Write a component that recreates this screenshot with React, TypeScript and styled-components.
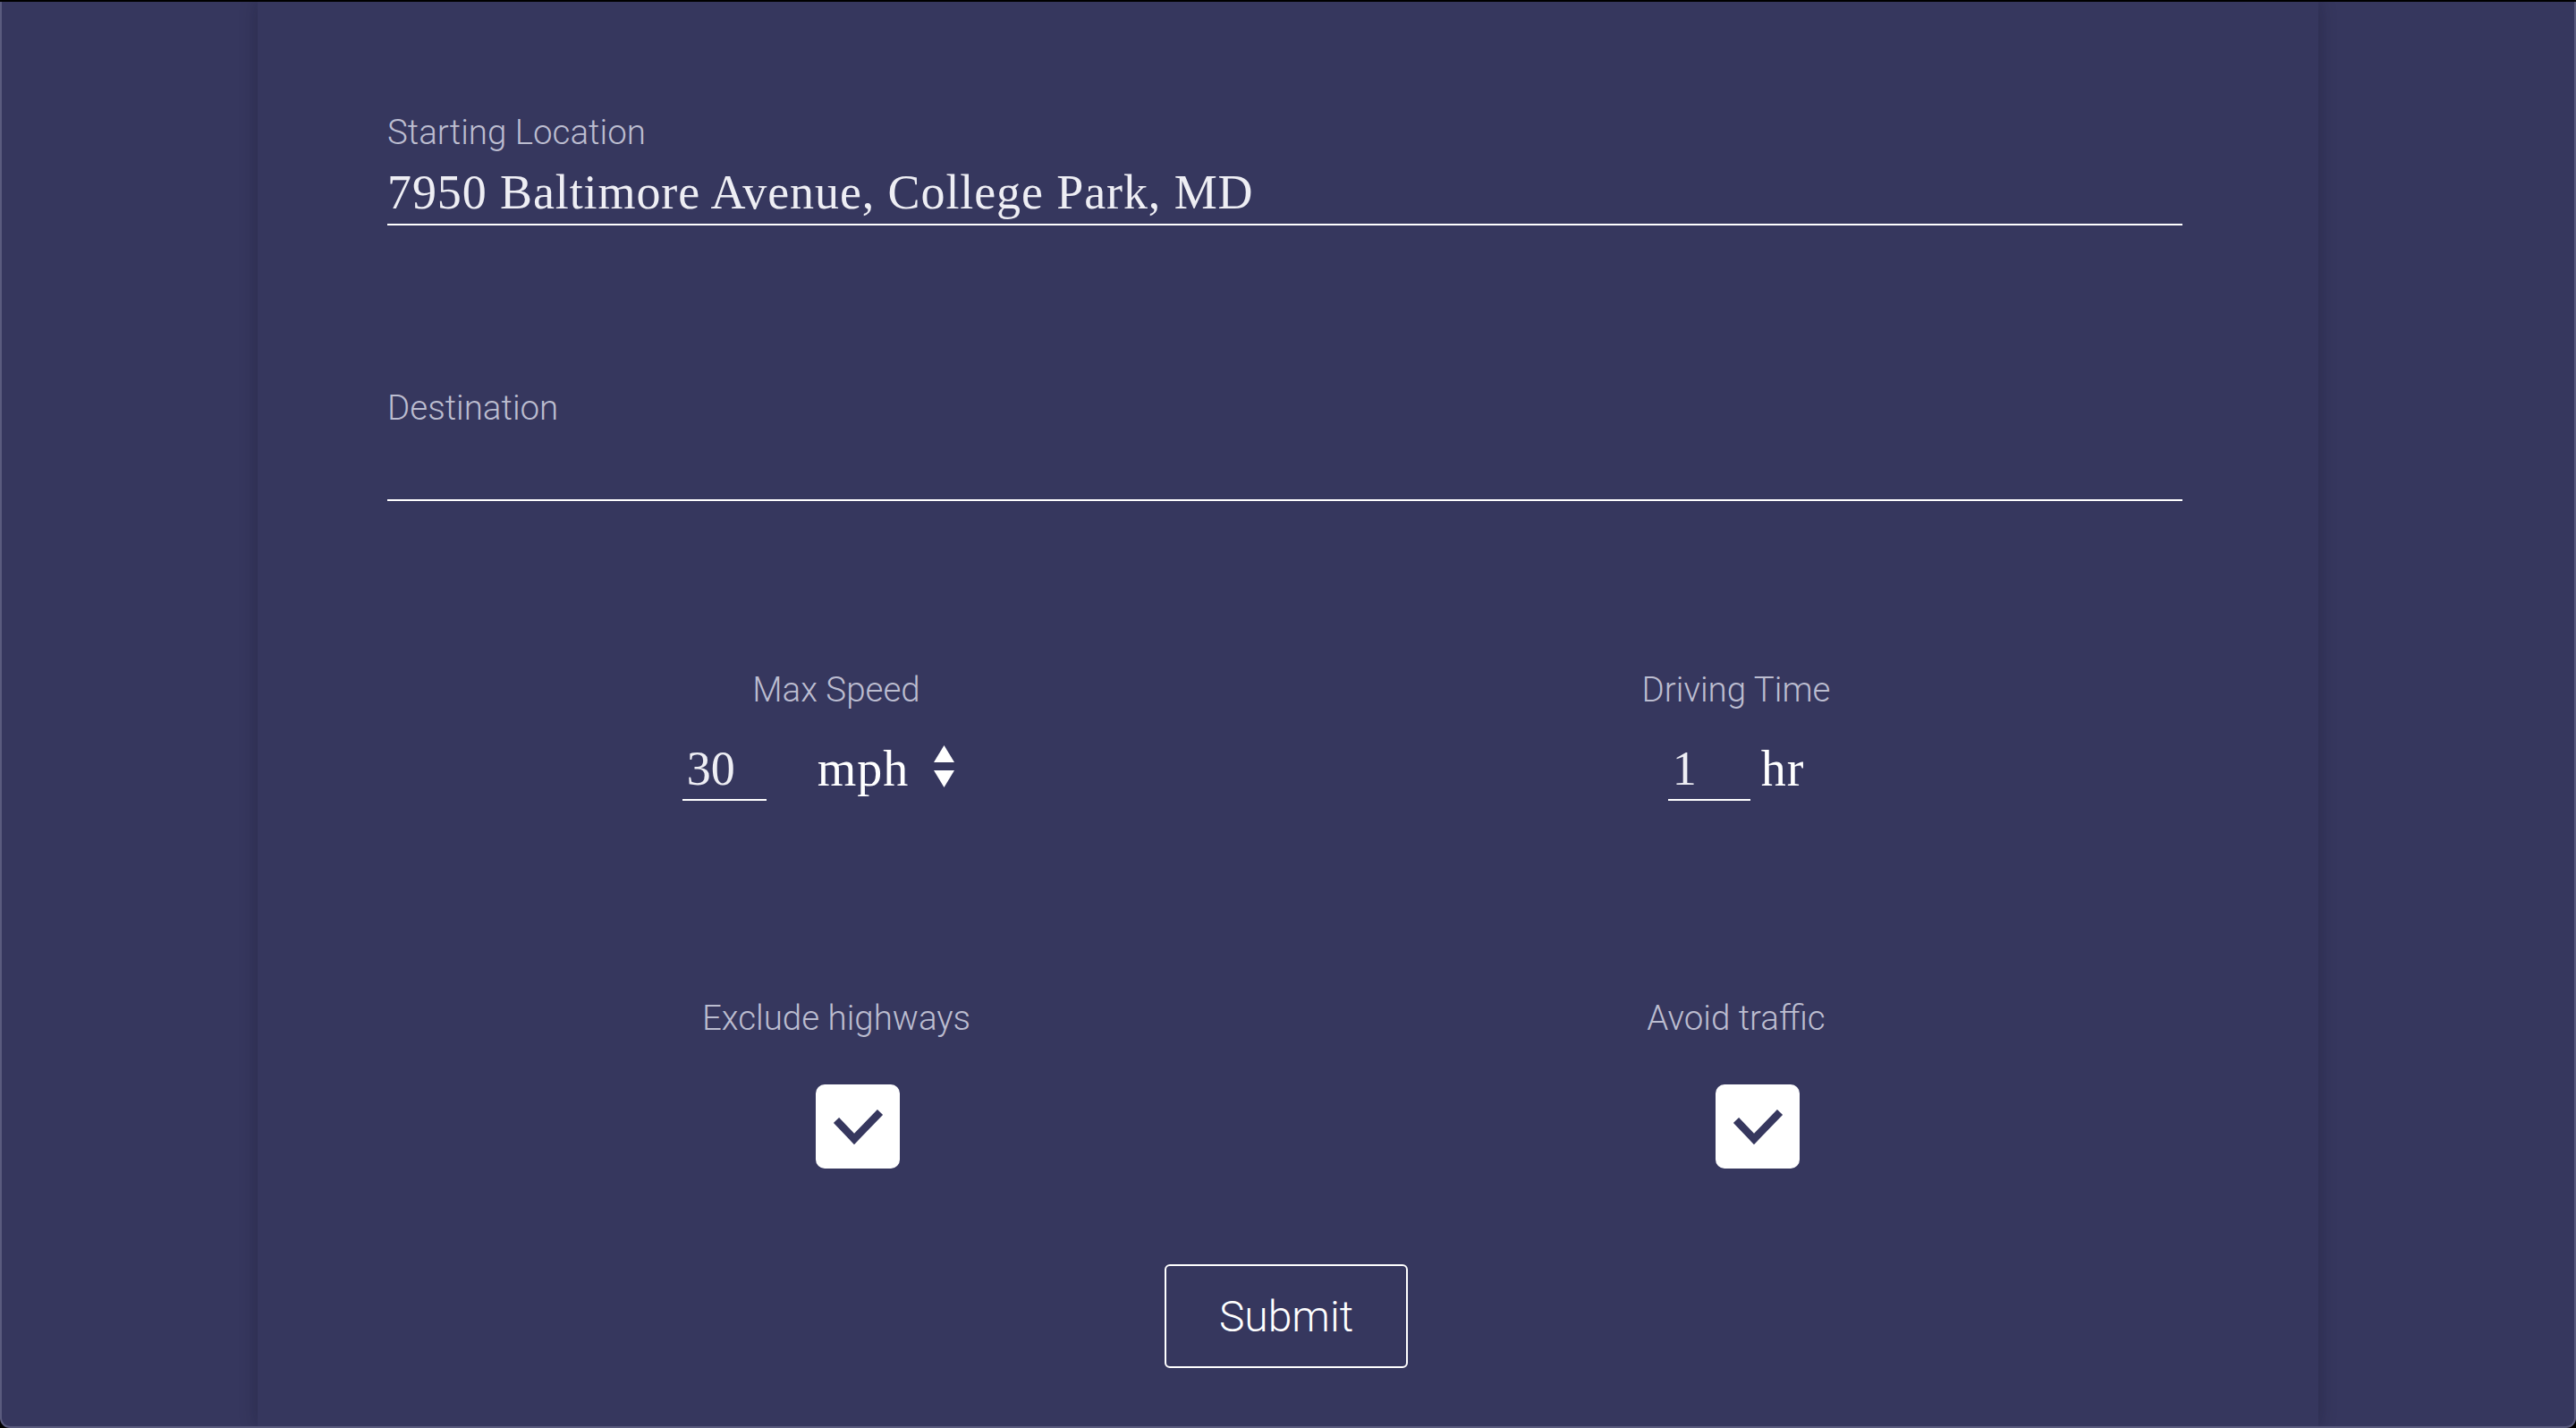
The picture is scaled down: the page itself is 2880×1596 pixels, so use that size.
import React from "react";
import styled, { createGlobalStyle } from "styled-components";

const GlobalStyle = createGlobalStyle`
  html, body {
    margin: 0;
    padding: 0;
    background: #000;
  }
  #root {
    width: 2880px;
    height: 1596px;
  }
`;

const Screen = styled.div`
  box-sizing: border-box;
  width: 2880px;
  height: 1596px;
  padding-top: 2px;
  background: #000;
`;

const Window = styled.div`
  box-sizing: border-box;
  height: 100%;
  display: flex;
  justify-content: center;
  overflow: hidden;

  background: #36375e;
  border: 2px solid #5a5b7e;
  border-top: none;
  border-radius: 0 0 11px 11px;
`;

const Panel = styled.form`
  box-sizing: border-box;
  width: 2304px;
  height: 100%;
  display: flex;
  flex-direction: column;
  padding: 122px 152px 0 145px;

  background: #36375e;
  box-shadow: 0 0 18px rgba(10, 10, 30, 0.28);
`;

const Field = styled.div<{ gap: number }>`
  display: flex;
  flex-direction: column;
  gap: 13px;
  margin-bottom: ${(props) => props.gap}px;
`;

const Label = styled.label`
  display: block;
  color: #bcbdd0;
  font-family: Roboto, "Liberation Sans", sans-serif;
  font-weight: 300;
  font-size: 38.5px;
  line-height: 48px;
`;

const TextInput = styled.input`
  box-sizing: content-box;
  width: 100%;
  height: 60px;
  margin: 0;
  padding: 0 0 5px;

  color: #eeeef4;
  background: transparent;
  border: none;
  border-bottom: 2px solid #ffffff;
  outline: none;

  font-family: "Liberation Serif", "Times New Roman", serif;
  font-size: 54px;
  letter-spacing: 0.9px;
  line-height: 60px;
`;

const OptionGrid = styled.div<{ gap: number }>`
  display: grid;
  grid-template-columns: 1fr 1fr;
  column-gap: 8px;
  margin: 0 0 ${(props) => props.gap}px 3px;
`;

const Option = styled.div<{ spacing: number }>`
  display: flex;
  flex-direction: column;
  align-items: center;
  gap: ${(props) => props.spacing}px;
`;

const InputRow = styled.div`
  display: flex;
  align-items: flex-start;
`;

const NumberInput = styled.input<{ w: number }>`
  box-sizing: border-box;
  width: ${(props) => props.w}px;
  height: 66px;
  margin: 0;
  padding: 0 0 4px 5px;

  color: #eeeef4;
  background: transparent;
  border: none;
  border-bottom: 2px solid #ffffff;
  outline: none;

  font-family: "Liberation Serif", "Times New Roman", serif;
  font-size: 54px;
  line-height: 60px;
`;

const Unit = styled.span<{ lead: number }>`
  margin-left: ${(props) => props.lead}px;
  color: #ffffff;
  font-family: "Liberation Serif", "Times New Roman", serif;
  font-size: 56px;
  letter-spacing: 1px;
  line-height: 60px;
`;

const SelectBox = styled.div`
  display: flex;
  align-items: flex-start;
  padding-right: 40px;
`;

const Spinner = styled.svg`
  margin: 4px 0 0 28px;
`;

const CheckBox = styled.button`
  box-sizing: border-box;
  width: 94px;
  height: 94px;
  margin: 0 0 0 48px;
  padding: 0;
  display: flex;
  align-items: center;
  justify-content: center;

  background: #ffffff;
  border: none;
  border-radius: 10px;
`;

const Actions = styled.div`
  display: flex;
  justify-content: center;
  padding-left: 3px;
`;

const SubmitButton = styled.button`
  box-sizing: border-box;
  width: 272px;
  height: 116px;
  padding: 0;

  color: #ffffff;
  background: transparent;
  border: 2px solid #ffffff;
  border-radius: 6px;

  font-family: Roboto, "Liberation Sans", sans-serif;
  font-weight: 300;
  font-size: 48px;
`;

const Check = () => (
  <CheckBox type="button">
    <svg width="94" height="94" viewBox="0 0 94 94">
      <polyline
        points="23,40 43,61 72,31"
        fill="none"
        stroke="#36375e"
        strokeWidth="8.5"
      />
    </svg>
  </CheckBox>
);

export default function App() {
  return (
    <Screen>
      <GlobalStyle />
      <Window>
        <Panel onSubmit={(e) => e.preventDefault()}>
          <Field gap={180}>
            <Label>Starting Location</Label>
            <TextInput defaultValue="7950 Baltimore Avenue, College Park, MD" />
          </Field>

          <Field gap={187}>
            <Label>Destination</Label>
            <TextInput defaultValue="" />
          </Field>

          <OptionGrid gap={219}>
            <Option spacing={34}>
              <Label>Max Speed</Label>
              <InputRow>
                <NumberInput w={94} defaultValue="30" />
                <SelectBox>
                  <Unit lead={57}>mph</Unit>
                  {/* native select arrows */}
                  <Spinner width="23" height="47" viewBox="0 0 23 47">
                    <polygon points="11.5,0 23,19 0,19" fill="#ffffff" />
                    <polygon points="0,28 23,28 11.5,47" fill="#ffffff" />
                  </Spinner>
                </SelectBox>
              </InputRow>
            </Option>
            <Option spacing={34}>
              <Label>Driving Time</Label>
              <InputRow>
                <NumberInput w={92} defaultValue="1" />
                <Unit lead={12}>hr</Unit>
              </InputRow>
            </Option>
          </OptionGrid>

          <OptionGrid gap={107}>
            <Option spacing={50}>
              <Label>Exclude highways</Label>
              <Check />
            </Option>
            <Option spacing={50}>
              <Label>Avoid traffic</Label>
              <Check />
            </Option>
          </OptionGrid>

          <Actions>
            <SubmitButton type="submit">Submit</SubmitButton>
          </Actions>
        </Panel>
      </Window>
    </Screen>
  );
}
